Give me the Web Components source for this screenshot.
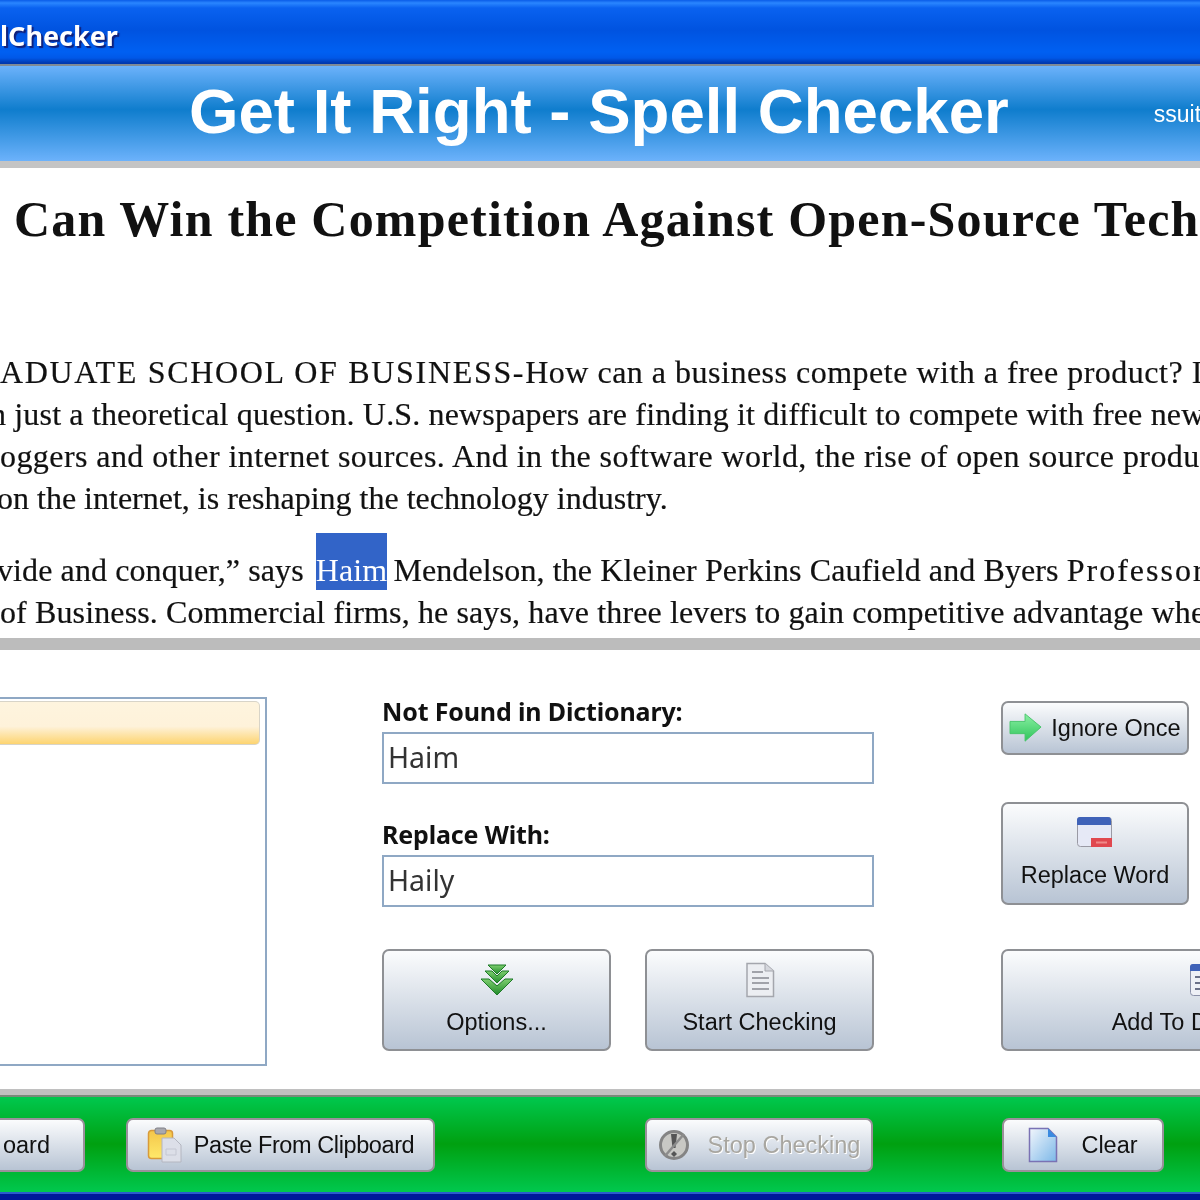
<!DOCTYPE html>
<html>
<head>
<meta charset="utf-8">
<style>
html, body { margin: 0; padding: 0; background: #fff; }
body { width: 1200px; height: 1200px; overflow: hidden; display: flex; flex-direction: column; filter: blur(0.5px); }
</style>
</head>
<body>
<app-titlebar>lChecker</app-titlebar>
<app-banner title-text="Get It Right - Spell Checker" side="ssuit"></app-banner>
<app-document></app-document>
<spell-panel></spell-panel>
<app-toolbar></app-toolbar>

<script>
const icons = {
    arrow: `<svg width="34" height="32" viewBox="0 0 36 34"><defs><linearGradient id="a" x1="0" y1="0" x2="0" y2="1"><stop offset="0" stop-color="#8af0a4"/><stop offset="1" stop-color="#2fc45a"/></linearGradient></defs><path d="M1 10H17V2L34 16 17 31V23H1Z" fill="url(#a)" stroke="#46c46a"/></svg>`,
    win: `<svg width="38" height="34" viewBox="0 0 38 34"><rect x="1.5" y="1.5" width="34" height="29" rx="3" fill="#e6e9f6" stroke="#9a9aa4"/><path d="M1 4a3 3 0 0 1 3-3H32a3 3 0 0 1 3 3V9H1Z" fill="#3f62b8"/><rect x="15" y="22" width="21" height="9" fill="#e0484f"/><rect x="20" y="25.5" width="11" height="2" fill="#f08a8a"/></svg>`,
    options: `<svg width="34" height="32" viewBox="0 0 34 32"><defs><linearGradient id="g" x1="0" y1="0" x2="0" y2="1"><stop offset="0" stop-color="#7fcf70"/><stop offset="1" stop-color="#1f8a2a"/></linearGradient></defs><g fill="url(#g)" stroke="#1d7a27" stroke-width="1"><path d="M8 1H26L17 10Z"/><path d="M5 7 12 7 17 12 22 7 29 7 17 19Z"/><path d="M1 15 9 15 17 22 25 15 33 15 17 31Z"/></g></svg>`,
    page: `<svg width="30" height="36" viewBox="0 0 30 36"><path d="M2 1.5H20L28.5 9V34.5H2Z" fill="#eceef2" stroke="#a4a6ad" stroke-width="1.5"/><path d="M20 1.5V9H28.5" fill="#d5d7dd" stroke="#a4a6ad"/><g stroke="#a0a2a9" stroke-width="2"><path d="M7 10H18M7 16H24M7 21H24M7 27H24"/></g></svg>`,
    addBook: `<svg width="30" height="34" viewBox="0 0 30 34"><rect x="1.5" y="1.5" width="27" height="31" rx="3" fill="#eef0f6" stroke="#8a90a8"/><path d="M1 4a3 3 0 0 1 3-3H26a3 3 0 0 1 3 3V8H1Z" fill="#3f62b8"/><g stroke="#6a7088" stroke-width="2"><path d="M6 14H24M6 20H24M6 26H24"/></g></svg>`,
    paste: `<svg width="36" height="36" viewBox="0 0 36 36"><defs><linearGradient id="p" x1="0" y1="0" x2="0" y2="1"><stop offset="0" stop-color="#f4c64a"/><stop offset="1" stop-color="#ffe96a"/></linearGradient></defs><rect x="1.5" y="3.5" width="24" height="28" rx="3" fill="url(#p)" stroke="#d89a3a" stroke-width="1.5"/><rect x="8" y="1" width="11" height="6" rx="2" fill="#a8a8ae" stroke="#808088"/><path d="M15 11H27L34 18V35H15Z" fill="#dcdfe8" stroke="#b4b6c0"/><path d="M19 22H29V28H19Z" fill="none" stroke="#c4c7d2"/></svg>`,
    stop: `<svg width="32" height="34" viewBox="0 0 32 34"><circle cx="16" cy="17" r="13.5" fill="#c8c8c4" stroke="#848484" stroke-width="3"/><path d="M13 6H19L17.5 20H14.5Z" fill="#555"/><path d="M16 23 19 26 16 29 13 26Z" fill="#555"/><path d="M7 28 26 6" stroke="#8c8c8c" stroke-width="2.5"/></svg>`,
    clear: `<svg width="30" height="36" viewBox="0 0 30 36"><defs><linearGradient id="c" x1="0" y1="0" x2="1" y2="1"><stop offset="0" stop-color="#f2f6fc"/><stop offset="1" stop-color="#7cb8e8"/></linearGradient></defs><path d="M1.5 1.5H20L28.5 10V34.5H1.5Z" fill="url(#c)" stroke="#7a72b4" stroke-width="1.5"/><path d="M20 1.5 28.5 10H20Z" fill="#3a8ae0"/></svg>`
};

// barre de titre
class AppTitlebar extends HTMLElement {
    constructor() {
        super();
        this.attachShadow({ mode: "open" });
        this.shadowRoot.innerHTML = `<style>
        :host {
            display: block; height: 64px; box-sizing: border-box; flex: none;
            background: linear-gradient(#0a5ce8 0, #2a86ff 3px, #0a62f0 8px, #0053e0 30px, #0060f2 52px, #0058e8 58px, #0038b0 63px);
            color: #fff;
            font: bold 27px/72px "Noto Sans", sans-serif;
            text-shadow: 2px 2px 1px #10207a;
        }
        </style><slot></slot>`;
    }
}

class AppBanner extends HTMLElement {
    constructor() {
        super();
        this.attachShadow({ mode: "open" });
    }
    connectedCallback() {
        this.shadowRoot.innerHTML = `<style>
        :host {
            display: flex; height: 104px; box-sizing: border-box; flex: none;
            border-top: 2px solid #7f8a96;
            border-bottom: 7px solid #c4c4c4;
            padding-bottom: 6px;
            background: linear-gradient(#6cb2fb 0, #0f7dcd 46%, #6cb2fb 100%);
            color: #fff; overflow: hidden;
            align-items: center;
        }
        h1 { margin: 0 0 0 189px; font: bold 63.6px "Liberation Sans", sans-serif; white-space: nowrap; }
        span { margin-left: 145px; font: 23px "Liberation Sans", sans-serif; white-space: nowrap; padding-top: 8px; }
        </style><h1>${this.getAttribute("title-text")}</h1><span>${this.getAttribute("side")}</span>`;
    }
}

class AppDocument extends HTMLElement {
    constructor() {
        super();
        this.attachShadow({ mode: "open" });
        this.shadowRoot.innerHTML = `<style>
        :host {
            display: block; height: 482px; box-sizing: border-box; flex: none;
            background: #fff; color: #111; overflow: hidden;
            font-family: "Liberation Serif", serif; white-space: nowrap;
            border-bottom: 12px solid #bcbcbc;
        }
        h2 { margin: 20px 0 0 14px; font-size: 50px; line-height: 62px; font-weight: bold; letter-spacing: 1.2px; }
        p { margin: 0; font-size: 32px; line-height: 42px; -webkit-text-stroke: 0.2px #111; }
        p span { display: block; }
        p span span { display: inline; }
        .first { margin-top: 101px; }
        .second { margin-top: 30px; }
        .caps { letter-spacing: 1.68px; }
        .rest { letter-spacing: 0.5px; }
        .l2 { margin-left: -10px; letter-spacing: 0.16px; }
        .l3 { letter-spacing: 0.42px; }
        .l4 { margin-left: -3px; }
        .l5 { margin-left: -3px; letter-spacing: 0.1px; }
        .l6 { letter-spacing: 0.12px; }
        .wide { letter-spacing: 2px; }
        mark { background: #3264c8; color: #fff; -webkit-text-stroke: 0; padding: 19px 0 2px; margin: 0 -2px 0 4px; }
        </style>
        <h2>Can Win the Competition Against Open-Source Tech</h2>
        <p class="first"><span><span class="caps">ADUATE SCHOOL OF BUSINESS-</span><span class="rest">How can a business compete with a free product? I</span></span>
        <span class="l2">n just a theoretical question. U.S. newspapers are finding it difficult to compete with free new</span>
        <span class="l3">oggers and other internet sources. And in the software world, the rise of open source produ</span>
        <span class="l4">on the internet, is reshaping the technology industry.</span></p>
        <p class="second"><span class="l5">vide and conquer,” says <mark>Haim</mark> Mendelson, the Kleiner Perkins Caufield and Byers <span class="wide">Professor</span></span>
        <span class="l6">of Business. Commercial firms, he says, have three levers to gain competitive advantage whe</span></p>`;
    }
}

class AppButton extends HTMLElement {
    constructor() {
        super();
        this.attachShadow({ mode: "open" });
        this.shadowRoot.innerHTML = `<style>
        :host {
            display: flex; box-sizing: border-box; flex: none;
            align-items: center; justify-content: center; gap: 8px;
            border: 2px solid #8e9094; border-radius: 7px;
            background: linear-gradient(#fbfcfd, #b8c4d4);
            color: #111; white-space: nowrap;
            font: 23.5px/30px "Liberation Sans", sans-serif;
        }
        :host([stack]) { flex-direction: column; justify-content: flex-start; gap: 10px; padding-top: 12px; }
        :host([stack]) ::slotted([slot=icon]) { height: 34px; }
        :host([disabled]) { color: #a8a6a0; text-shadow: 1px 1px 0 #fff; }
        ::slotted([slot=icon]) { display: flex; align-items: center; }
        </style><slot name="icon"></slot><slot></slot>`;
    }
}

class TextField extends HTMLElement {
    constructor() {
        super();
        this.attachShadow({ mode: "open" });
    }
    connectedCallback() {
        this.shadowRoot.innerHTML = `<style>
        :host { display: block; }
        label { display: block; margin-bottom: 6px; font: bold 25px/30px "Noto Sans", sans-serif; color: #111; letter-spacing: -0.15px; }
        div {
            box-sizing: border-box; height: 52px; padding-left: 4px;
            border: 2px solid #8fa8c4; color: #333;
            font: 28.5px/46px "Noto Sans", sans-serif;
        }
        </style><label>${this.getAttribute("label")}</label><div>${this.getAttribute("value")}</div>`;
    }
}

class SpellPanel extends HTMLElement {
    constructor() {
        super();
        this.attachShadow({ mode: "open" });
        this.shadowRoot.innerHTML = `<style>
        :host {
            display: flex; height: 445px; box-sizing: border-box; flex: none;
            padding-top: 47px; background: #fff; overflow: hidden;
            border-bottom: 6px solid #c0c0c0;
        }
        .list {
            flex: none; box-sizing: border-box; width: 267px; height: 369px;
            border: 2px solid #8fa8c4; border-left: none; padding: 2px 5px 0 0;
        }
        .item {
            height: 42px; border-radius: 0 5px 5px 0; border: 1px solid #d8d4c8; border-left: none;
            background: linear-gradient(#fef4de 0, #fef2da 58%, #fdd470 100%);
        }
        .mid { flex: none; width: 492px; margin-left: 115px; display: flex; flex-direction: column; margin-top: -1px; }
        .mid text-field + text-field { margin-top: 35px; }
        .mid .row { display: flex; justify-content: space-between; margin-top: 42px; }
        .mid app-button { width: 229px; height: 102px; }
        .right { flex: none; margin-left: 127px; width: 188px; display: flex; flex-direction: column; padding-top: 4px; }
        .once { height: 54px; }
        .replace { height: 103px; margin-top: 47px; }
        .add { width: 405px; height: 102px; margin-top: 44px; }
        </style>
        <div class="list"><div class="item"></div></div>
        <div class="mid">
            <text-field label="Not Found in Dictionary:" value="Haim"></text-field>
            <text-field label="Replace With:" value="Haily"></text-field>
            <div class="row">
                <app-button stack><span slot="icon">${icons.options}</span>Options...</app-button>
                <app-button stack><span slot="icon">${icons.page}</span>Start Checking</app-button>
            </div>
        </div>
        <div class="right">
            <app-button class="once"><span slot="icon">${icons.arrow}</span>Ignore Once</app-button>
            <app-button class="replace" stack><span slot="icon">${icons.win}</span>Replace Word</app-button>
            <app-button class="add" stack><span slot="icon">${icons.addBook}</span>Add To Dictionary</app-button>
        </div>`;
    }
}

class AppToolbar extends HTMLElement {
    constructor() {
        super();
        this.attachShadow({ mode: "open" });
        this.shadowRoot.innerHTML = `<style>
        :host {
            display: flex; height: 105px; box-sizing: border-box; flex: none;
            padding-top: 21px; align-items: flex-start;
            border-top: 2px solid #7a8a7a;
            background: linear-gradient(#00c84e 0, #00a010 47px, #00c84e 95px, #2a5ccc 95px, #2a5ccc 97px, #00189a 97px);
        }
        app-button { height: 54px; border-color: #9a909a; }
        .copy { width: 85px; border-left: none; border-radius: 0 7px 7px 0; justify-content: flex-end; padding-right: 33px; }
        .paste { width: 309px; margin-left: 41px; gap: 11px; letter-spacing: -0.4px; }
        .stop { width: 228px; margin-left: 210px; gap: 18px; }
        .clear { width: 162px; margin-left: 129px; gap: 23px; }
        </style>
        <app-button class="copy">oard</app-button>
        <app-button class="paste"><span slot="icon">${icons.paste}</span>Paste From Clipboard</app-button>
        <app-button class="stop" disabled><span slot="icon">${icons.stop}</span>Stop Checking</app-button>
        <app-button class="clear"><span slot="icon">${icons.clear}</span>Clear</app-button>`;
    }
}

customElements.define("app-titlebar", AppTitlebar);
customElements.define("app-banner", AppBanner);
customElements.define("app-document", AppDocument);
customElements.define("app-button", AppButton);
customElements.define("text-field", TextField);
customElements.define("spell-panel", SpellPanel);
customElements.define("app-toolbar", AppToolbar);
</script>
</body>
</html>
